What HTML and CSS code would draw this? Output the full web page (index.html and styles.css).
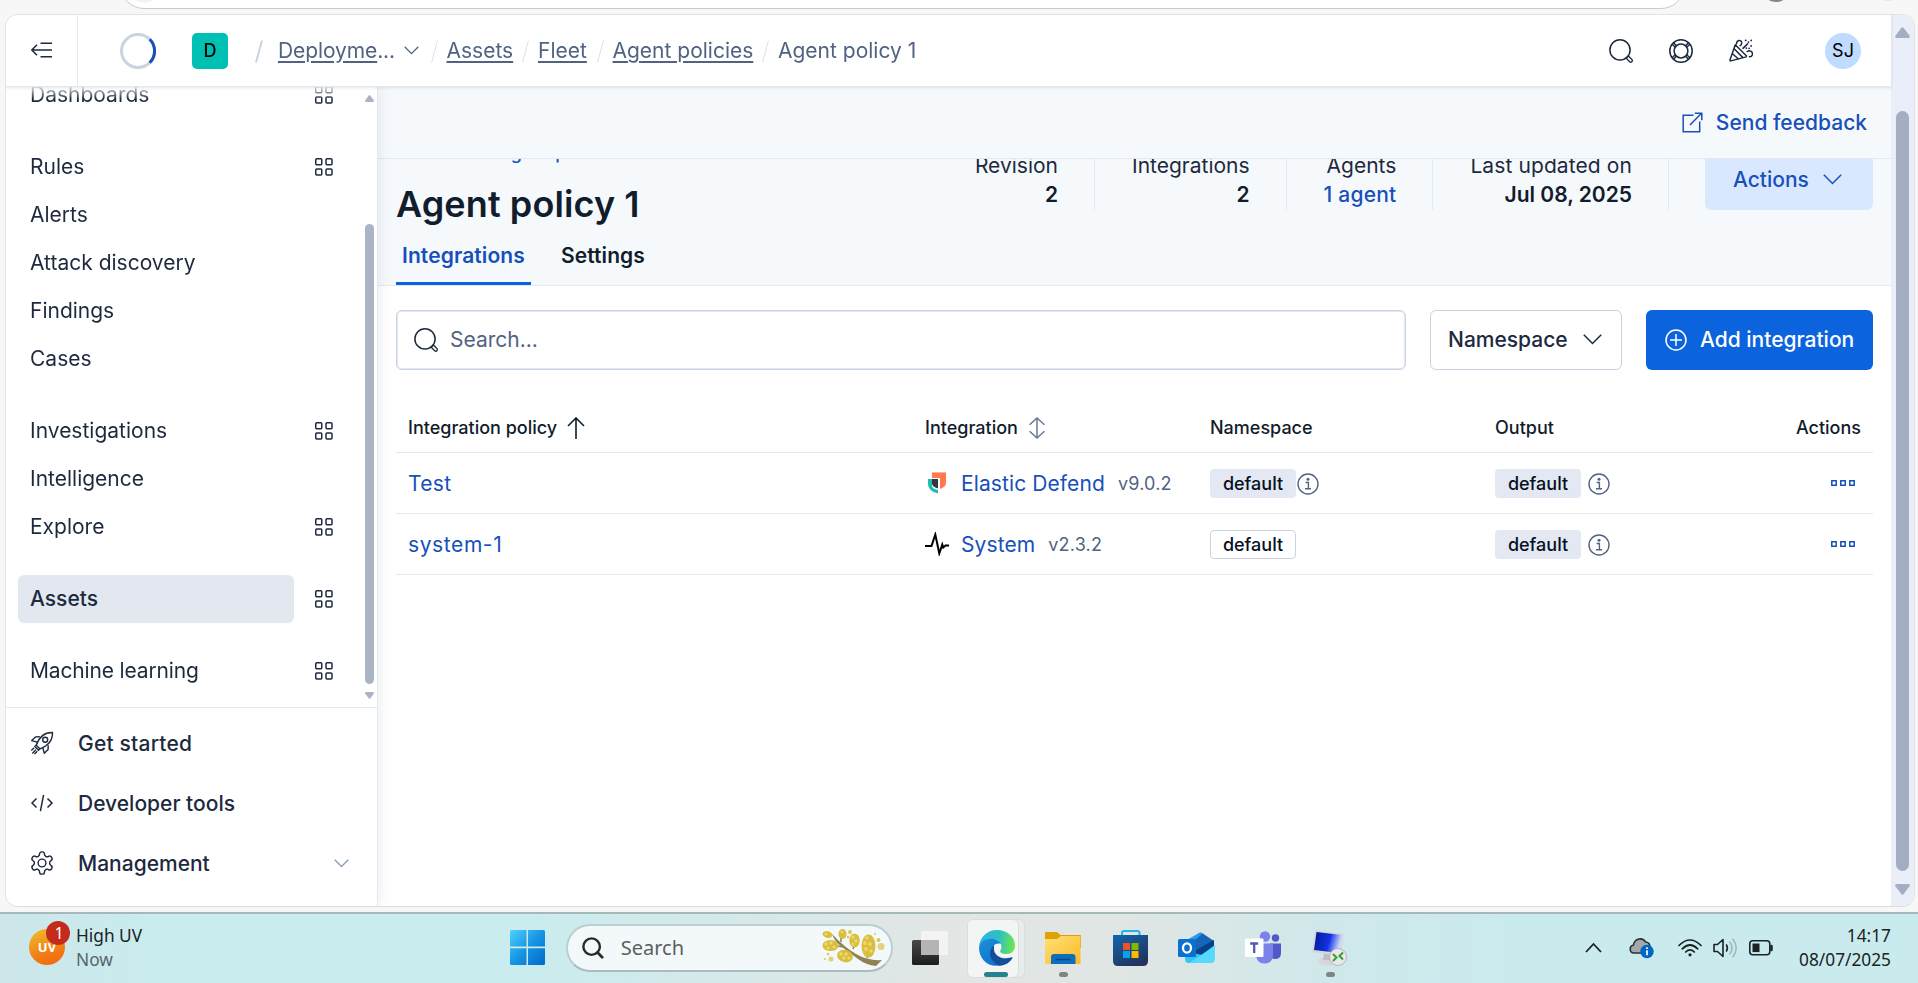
FILE: index.html
```html
<!DOCTYPE html>
<html lang="en">
<head>
<meta charset="utf-8">
<title>Agent policy 1</title>
<link rel="stylesheet" href="styles.css">
</head>
<body>
<svg class="defs" aria-hidden="true">
  <symbol id="grid" viewBox="0 0 18 18"><g fill="none" stroke="currentColor" stroke-width="1.5"><rect x=".75" y=".75" width="6" height="6" rx="1"/><rect x="11" y=".75" width="6" height="6" rx="1"/><rect x=".75" y="11" width="6" height="6" rx="1"/><rect x="11" y="11" width="6" height="6" rx="1"/></g></symbol>
  <symbol id="info" viewBox="0 0 22 22"><circle cx="11" cy="11" r="10" fill="none" stroke="currentColor" stroke-width="1.4"/><circle cx="11" cy="6.3" r="1.5" fill="currentColor"/><path d="M8.6 9.5h2.8v6M8 15.8h6" fill="none" stroke="currentColor" stroke-width="1.4"/></symbol>
  <symbol id="dots" viewBox="0 0 24 6"><path d="M.8.8h4.4v4.4H.8zM9.8.8h4.4v4.4H9.8zM18.8.8h4.4v4.4h-4.4z" fill="none" stroke="currentColor" stroke-width="1.5"/></symbol>
  <symbol id="search" viewBox="0 0 24 24"><g fill="none" stroke="currentColor" stroke-width="1.5"><circle cx="11" cy="10.9" r="10.1"/><path d="M17.2 19.2l2.2-2.2 3.5 3.5a1.5 1.5 0 0 1-2.2 2.2z" stroke-width="1.3"/></g></symbol>
</svg>

<div class="browser">
  <div class="addressbar"></div>
  <span class="site-chip"></span><span class="profile-chip"></span><span class="menu-chip"></span>
</div>

<div class="window">
  <div class="app">
    <header class="topbar">
      <div class="collapse"><svg width="22" height="16" viewBox="0 0 22 16" fill="none" stroke="currentColor" stroke-width="1.5"><path d="M9.5 1.2H21M1 8h20M9.5 14.8H21M6 2.8L.9 8 6 13.2"/></svg></div>
      <svg class="spinner" width="36" height="36" viewBox="0 0 36 36" fill="none" stroke-width="3"><circle cx="18" cy="18" r="16.5" stroke="#cad3e2"/><path d="M29.7 6.3A16.5 16.5 0 0 1 29.7 29.7" stroke="#1750ba"/></svg>
      <span class="space">D</span>
      <nav class="crumbs">
        <i class="slash strong"></i>
        <span class="crumb c1"><u>Deployme</u>...</span>
        <svg class="crumb-chev" width="15" height="9" viewBox="0 0 15 9" fill="none" stroke="currentColor" stroke-width="1.3"><path d="M.7.8l6.8 6.8L14.3.8"/></svg>
        <i class="slash"></i><u class="crumb c2">Assets</u>
        <i class="slash"></i><u class="crumb c3">Fleet</u>
        <i class="slash"></i><u class="crumb c4">Agent policies</u>
        <i class="slash"></i><span class="crumb c5">Agent policy 1</span>
      </nav>
      <div class="tools">
        <svg width="24" height="24"><use href="#search"/></svg>
        <svg width="24" height="24" viewBox="0 0 24 24" fill="none" stroke="currentColor" stroke-width="1.5"><circle cx="12" cy="12" r="11.2"/><circle cx="12" cy="12" r="6.9"/><path d="M4.5 3.8l3 3M3.2 5.3l3 3M19.5 3.8l-3 3M20.8 5.3l-3 3M4.5 20.2l3-3M3.2 18.7l3-3M19.5 20.2l-3-3M20.8 18.7l-3-3"/></svg>
        <svg width="24" height="24" viewBox="0 0 24.5 24" fill="none" stroke="currentColor" stroke-width="1.5" stroke-linejoin="round" stroke-linecap="round"><path d="M6.4 5.6L1 21.2q-.2 1 .9.9L17.6 18M6.4 5.6L17.9 17.2M5.2 9.6L14 18.5M3.6 14.800l6 5.300"/><path d="M7.600 4.800C7.800.600 12.700.200 13 3.500c.100 1.800-.900 2.700-1.600 3.100M18.600 12.600c2.600-1.900 6.100.300 5.200 3.400-.400 1.300-1.700 2-3 1.900M14.200 9.300l4.800-4.600"/><path d="M17 1.200h.1M22.600 1.200h.1M19.800 2.900h.1M22.600 6.800h.1M20.500 9.200h.1M17.600 9h.1" stroke-width="1.800"/></svg>
        <span class="avatar">SJ</span>
      </div>
    </header>

    <div class="body">
      <aside class="sidebar">
        <div class="nav-scroll">
          <ul class="nav">
            <li><span>Dashboards</span><svg><use href="#grid"/></svg></li>
            <li class="gap"><span>Rules</span><svg><use href="#grid"/></svg></li>
            <li><span>Alerts</span></li>
            <li><span>Attack discovery</span></li>
            <li><span>Findings</span></li>
            <li><span>Cases</span></li>
            <li class="gap"><span>Investigations</span><svg><use href="#grid"/></svg></li>
            <li><span>Intelligence</span></li>
            <li><span>Explore</span><svg><use href="#grid"/></svg></li>
            <li class="gap active"><span>Assets</span><svg><use href="#grid"/></svg></li>
            <li class="gap"><span class="ml">Machine learning</span><svg><use href="#grid"/></svg></li>
          </ul>
          <div class="nav-bar">
            <svg width="9" height="7" viewBox="0 0 9 7"><path d="M3.800.5q.7-.8 1.400 0L8.800 5.300Q9 7 8 7H1Q0 7 .2 5.300z" fill="currentColor"/></svg>
            <i></i>
            <svg width="9" height="7" viewBox="0 0 9 7"><path d="M3.800 6.500q.7.800 1.400 0L8.800 1.700Q9 0 8 0H1Q0 0 .2 1.700z" fill="currentColor"/></svg>
          </div>
        </div>
        <ul class="footnav">
          <li><svg width="24" height="24" viewBox="0 0 24 24" fill="none" stroke="currentColor" stroke-width="1.4" stroke-linejoin="round"><path d="M22.5 1.5C15 1.300 9.500 5 6.200 14.200l3.600 3.600C18.800 14.600 22.700 9 22.500 1.500z"/><circle cx="15.2" cy="8.800" r="2.500"/><path d="M9.800 5.800L5.500 5.900 1.700 9.600l5.500 1.600M18.200 14.200l-.1 4.300-3.800 3.800-1.500-5.500M6.200 14.200l-1.400 1.300 3.700 3.700 1.300-1.400M4.200 16.800L1.300 19.600M2.300 22.400l3.600-3.600M4.500 23l2.900-2.800"/></svg><span class="gs">Get started</span></li>
          <li><svg width="24" height="24" viewBox="0 0 24 24" fill="none" stroke="currentColor" stroke-width="1.5"><path d="M6.500 7.500L2 12l4.500 4.500M17.500 7.500L22 12l-4.500 4.500M13.600 3.800l-3.200 16.400"/></svg><span>Developer tools</span></li>
          <li><svg width="24" height="24" viewBox="1.4 1.2 21.2 21.6" fill="none" stroke="currentColor" stroke-width="1.3"><path d="M12.220 2h-.440a2 2 0 0 0-2 2v.180a2 2 0 0 1-1 1.730l-.430.250a2 2 0 0 1-2 0l-.150-.080a2 2 0 0 0-2.730.730l-.220.380a2 2 0 0 0 .730 2.730l.150.100a2 2 0 0 1 1 1.720v.510a2 2 0 0 1-1 1.740l-.150.090a2 2 0 0 0-.730 2.730l.220.380a2 2 0 0 0 2.730.730l.150-.080a2 2 0 0 1 2 0l.430.250a2 2 0 0 1 1 1.730V20a2 2 0 0 0 2 2h.440a2 2 0 0 0 2-2v-.180a2 2 0 0 1 1-1.730l.430-.250a2 2 0 0 1 2 0l.150.080a2 2 0 0 0 2.730-.730l.220-.390a2 2 0 0 0-.730-2.730l-.150-.080a2 2 0 0 1-1-1.740v-.500a2 2 0 0 1 1-1.740l.150-.090a2 2 0 0 0 .730-2.730l-.220-.380a2 2 0 0 0-2.730-.730l-.150.080a2 2 0 0 1-2 0l-.430-.250a2 2 0 0 1-1-1.730V4a2 2 0 0 0-2-2z"/><circle cx="12" cy="12" r="3.500"/></svg><span>Management</span><svg class="chev" width="15" height="9" viewBox="0 0 15 9" fill="none" stroke="currentColor" stroke-width="1.4"><path d="M.7.8l6.8 6.8L14.3.8"/></svg></li>
        </ul>
      </aside>

      <main class="page">
        <div class="feedback"><svg width="21" height="21" viewBox="0 0 21 21" fill="none" stroke="currentColor" stroke-width="1.5"><path d="M11.500 3.300H1.200v16.500h16.500V9.500M8 13L19 1.800M12.800 1.200h7v7"/></svg><span>Send feedback</span></div>
        <section class="pagehead">
          <div class="headrow">
            <div class="titles"><a class="back">&lt;&nbsp; View all agent policies</a><h1>Agent policy 1</h1></div>
            <dl class="stats">
              <div><dt>Revision</dt><dd>2</dd></div>
              <div><dt>Integrations</dt><dd>2</dd></div>
              <div><dt>Agents</dt><dd class="link">1 agent</dd></div>
              <div><dt class="upd">Last updated on</dt><dd class="date">Jul 08, 2025</dd></div>
            </dl>
            <button class="actions"><span>Actions</span><svg width="19" height="11" viewBox="0 0 19 11" fill="none" stroke="currentColor" stroke-width="1.5"><path d="M.8.8l8.7 8.7L18.2.8"/></svg></button>
          </div>
          <div class="tabs"><span class="tab on">Integrations</span><span class="tab">Settings</span></div>
        </section>
        <section class="content">
          <div class="filters">
            <div class="searchbox"><svg width="24" height="24"><use href="#search"/></svg><span>Search...</span></div>
            <button class="ns"><span>Namespace</span><svg width="19" height="11" viewBox="0 0 19 11" fill="none" stroke="currentColor" stroke-width="1.5"><path d="M.8.8l8.7 8.7L18.2.8"/></svg></button>
            <button class="add"><svg width="22" height="22" viewBox="0 0 22 22" fill="none" stroke="currentColor" stroke-width="1.5"><circle cx="11" cy="11" r="10"/><path d="M11 5v12M5 11h12"/></svg><span>Add integration</span></button>
          </div>
          <div class="table">
            <div class="row head">
              <div>Integration policy<svg class="up" width="18" height="22" viewBox="0 0 18 22" fill="none" stroke="currentColor" stroke-width="1.6"><path d="M9 22V1.500M1 9l8-8 8 8"/></svg></div>
              <div>Integration<svg class="updown" width="16" height="22" viewBox="0 0 16 22" fill="none" stroke="#69779a" stroke-width="1.5"><path d="M8 1v20M.6 7.800L8 1l7.400 6.800M.6 14.200L8 21l7.400-6.800"/></svg></div>
              <div>Namespace</div><div>Output</div><div class="end">Actions</div>
            </div>
            <div class="row">
              <div class="link t1">Test</div>
              <div><svg class="logo" width="24" height="24" viewBox="0 0 24 24"><path d="M7 1h14v10.500q0 4.500-6 6.500V7H7z" fill="#ff7850"/><path d="M7 1h14v1H7z" fill="#ffb39c"/><path d="M3 8h4v6.500q0 3.500 6 4.500v3.500Q3 20 3 13z" fill="#1dbdb1"/><path d="M7 8h6v9.500Q7 15.500 7 12.500z" fill="#343742"/></svg><span class="link">Elastic Defend</span><small>v9.0.2</small></div>
              <div><span class="badge">default</span><svg class="info tight"><use href="#info"/></svg></div>
              <div><span class="badge">default</span><svg class="info"><use href="#info"/></svg></div>
              <div class="end dots"><svg><use href="#dots"/></svg></div>
            </div>
            <div class="row">
              <div class="link t2">system-1</div>
              <div><svg class="logo" width="24" height="24" viewBox="0 0 24 24"><path d="M0 14h6.500L10.300 2.500 14.300 21.500 17.300 12.500 18.300 15.500 20.500 13.500H24" fill="none" stroke="#000" stroke-width="2"/></svg><span class="link">System</span><small>v2.3.2</small></div>
              <div><span class="badge hollow">default</span></div>
              <div><span class="badge">default</span><svg class="info"><use href="#info"/></svg></div>
              <div class="end dots"><svg><use href="#dots"/></svg></div>
            </div>
          </div>
        </section>
      </main>
    </div>
  </div>
  <div class="scroll">
    <svg width="15" height="11" viewBox="0 0 15 11"><path d="M6.500.700q1-1.100 2 0L14.600 8.800Q15 11 13.500 11h-12Q0 11 .4 8.800z" fill="currentColor"/></svg>
    <i></i>
    <svg width="15" height="11" viewBox="0 0 15 11"><path d="M6.500 10.300q1 1.100 2 0L14.600 2.200Q15 0 13.500 0h-12Q0 0 .4 2.200z" fill="currentColor"/></svg>
  </div>
</div>

<footer class="taskbar">
  <div class="weather"><span class="uv">UV<b>1</b></span><div><div class="w1">High UV</div><div class="w2">Now</div></div></div>
  <div class="dock">
    <div class="cell"><svg width="35" height="35" viewBox="0 0 35 35"><defs><linearGradient id="wg" x1="0" y1="0" x2="1" y2="1" gradientUnits="objectBoundingBox"><stop stop-color="#4fd0fd"/><stop offset=".5" stop-color="#1795e2"/><stop offset="1" stop-color="#0069c9"/></linearGradient></defs><path d="M1.500 0H16.500V16.500H0V1.500Q0 0 1.500 0zM18 0H33.500Q35 0 35 1.500V16.500H18zM0 18.300H16.500V35H1.500Q0 35 0 33.500zM18 18.300H35V33.500Q35 35 33.500 35H18z" fill="url(#wg)"/></svg></div>
    <div class="tsearch">
      <svg width="22" height="22" viewBox="0 0 24 24" fill="none" stroke="#262a2b" stroke-width="2.6"><circle cx="10.500" cy="10.500" r="9"/><path d="M17 17l5 5" stroke-linecap="round" stroke-width="3"/></svg>
      <span>Search</span>
      <svg class="wattle" width="64" height="38" viewBox="0 0 64 38"><path d="M10 5Q22 18 34 25T60 31L54 37Q44 36 36 30T20 18 10 5z" fill="#8f8154"/><path d="M19 13V8M31 20l2-5M45 29l2-6M15 17l7 1M30 24l-5 2" stroke="#8f8154" stroke-width="1.5"/><g fill="#d9bd3c"><ellipse cx="5.500" cy="5.500" rx="5" ry="3.300" transform="rotate(12 5.500 5.500)"/><ellipse cx="20.500" cy="5" rx="4" ry="5"/><ellipse cx="8.500" cy="16.500" rx="8" ry="5.500"/><ellipse cx="32.500" cy="11.500" rx="5.200" ry="7"/><ellipse cx="46.500" cy="17" rx="7" ry="11.500"/><ellipse cx="23" cy="27" rx="8" ry="6.200" transform="rotate(12 23 27)"/></g><g fill="#eed86a"><circle cx="4" cy="5" r="1.500"/><circle cx="20" cy="3" r="1.500"/><circle cx="4" cy="15" r="1.700"/><circle cx="9" cy="14" r="1.700"/><circle cx="12" cy="18" r="1.600"/><circle cx="6" cy="19" r="1.500"/><circle cx="31" cy="8" r="1.700"/><circle cx="34" cy="12" r="1.700"/><circle cx="31" cy="15" r="1.500"/><circle cx="45" cy="9" r="1.800"/><circle cx="43" cy="14" r="1.900"/><circle cx="48" cy="15" r="1.900"/><circle cx="44" cy="20" r="1.900"/><circle cx="49" cy="22" r="1.700"/><circle cx="19" cy="25" r="1.700"/><circle cx="24" cy="25" r="1.700"/><circle cx="22" cy="29" r="1.700"/><circle cx="27" cy="29" r="1.600"/></g><g fill="#dfc652"><circle cx="28" cy="3" r="2"/><circle cx="26" cy="8" r="1.200"/><circle cx="56.500" cy="11" r="2"/><circle cx="53" cy="5" r="1"/><circle cx="59" cy="17.500" r="3.500" opacity=".75"/><circle cx="6" cy="25" r="1.300"/><circle cx="9" cy="30" r="2.500" opacity=".8"/><circle cx="3" cy="30" r="1"/></g></svg>
    </div>
    <div class="cell tv"><svg width="36" height="34" viewBox="0 0 36 34"><defs><linearGradient id="tvg" x2="0" y2="1"><stop stop-color="#484848"/><stop offset="1" stop-color="#1d1d1d"/></linearGradient></defs><rect y="9" width="27" height="25" rx="1.500" fill="url(#tvg)"/><rect x="9" y="0" width="27" height="24" rx="1.500" fill="#f3f3f3"/><path d="M9 9h18v15H9z" fill="#b4b4b4"/></svg></div>
    <div class="cell active-app"><i class="tile2"></i><i class="tile"></i><svg width="36" height="36" viewBox="0 0 36 36"><defs><linearGradient id="eg1" x1="0" y1=".3" x2="1" y2=".4"><stop stop-color="#2ab6e8"/><stop offset=".55" stop-color="#2cc1c0"/><stop offset="1" stop-color="#6ee650"/></linearGradient><linearGradient id="eg2" x2=".7" y2="1"><stop stop-color="#1d93d6"/><stop offset="1" stop-color="#0f6fd0"/></linearGradient></defs><path d="M0 17C1 6 9 0 18 0c10 0 18 6.500 18 15.500 0 6-4 8.500-8.500 8.500-4 0-6.500-1.300-6.300-3 .2-1 1.300-1.600 1.300-4.300C22.500 12 18 9 12 9 6 9 2 12 0 17z" fill="url(#eg1)"/><path d="M0 18C.8 12 5.500 8.800 11.500 8.800c5 0 9 2 10.500 5.200-5-1.500-9 1.500-9.500 7C12 29 18 34 24 34.800 10 39 0 29.500 0 18z" fill="url(#eg2)"/><path d="M15 15C9 20 9.500 31 20.500 35.700c6-.4 10.500-3.200 13-7.700.4-.8-.2-1-1-.7C24 30.500 15 26 15 19z" fill="#114f98"/></svg><b class="run wide"></b></div>
    <div class="cell"><svg width="36" height="32" viewBox="0 0 36 32"><defs><linearGradient id="fg" x2="1" y2="1"><stop stop-color="#ffe077"/><stop offset="1" stop-color="#fbba28"/></linearGradient></defs><path d="M0 1Q0 0 1 0h11l3.500 3H35q1 0 1 1v12H0z" fill="#dfa008"/><path d="M0 7h12l4-3h19.500v28H1Q0 32 0 31z" fill="url(#fg)"/><path d="M6 32V25q0-3 3-3H27.500q3 0 3 3v7z" fill="#0f6fbe"/><path d="M11 27.500h14" stroke="#0a4a8b" stroke-width="1.5" stroke-linecap="round"/></svg><b class="run"></b></div>
    <div class="cell"><svg width="35" height="36" viewBox="0 0 35 36"><defs><linearGradient id="sg" x2=".6" y2="1"><stop stop-color="#0f66b0"/><stop offset="1" stop-color="#24335d"/></linearGradient></defs><path d="M9 7V3q0-2 2-2h13.500q2 0 2 2v4" fill="none" stroke="#27b1ea" stroke-width="2"/><path d="M0 5h35v26q0 5-5 5H5q-5 0-5-5z" fill="url(#sg)"/><path d="M10 13h7v7h-7z" fill="#f25022"/><path d="M18.500 13h7v7h-7z" fill="#7fba00"/><path d="M10 21h7v7h-7z" fill="#00a4ef"/><path d="M18.500 21h7v7h-7z" fill="#ffb900"/></svg></div>
    <div class="cell"><svg width="37" height="32" viewBox="0 0 37 32"><path d="M7 12L21 1q1.500-1 3 0L36 9v8L20 25z" fill="#1467b8"/><path d="M7 9L21 1l4 0L17 8z" fill="#2a9be8"/><path d="M15 20L36 8v12L22 28z" fill="#083f87"/><path d="M7 19L24 23 36.500 13V27q0 4-4 4H11q-4 0-4-4z" fill="#32c4f3"/><path d="M11 31L36.500 14v13q0 4-4 4z" fill="#55dafd"/><rect y="7" width="18" height="18" rx="1.500" fill="#0b70d0"/><ellipse cx="9" cy="16" rx="4" ry="4.700" fill="none" stroke="#fff" stroke-width="2.3"/></svg></div>
    <div class="cell"><svg width="37" height="33" viewBox="0 0 37 33"><circle cx="20" cy="5.500" r="5.200" fill="#7b83eb"/><circle cx="30.500" cy="7" r="3.700" fill="#5059c9"/><path d="M25 12.500h11V22q0 6-6 6-3 0-5-2z" fill="#5059c9"/><path d="M11 12.500h17V23q0 9.500-8.500 9.500T11 23z" fill="#7b83eb"/><rect y="7.500" width="18.500" height="18.500" rx="1" fill="#fff"/><path d="M5.200 12.500h8M9.200 12.500v9.500" stroke="#5058b8" stroke-width="2.3"/></svg></div>
    <div class="cell"><svg width="36" height="36" viewBox="0 0 36 36"><defs><linearGradient id="rg" x1="0" y1="0" x2="1" y2=".2"><stop stop-color="#001a9a"/><stop offset=".6" stop-color="#1233e0"/><stop offset="1" stop-color="#cdd8ff"/></linearGradient></defs><ellipse cx="15" cy="31" rx="9" ry="4.500" fill="#d7d7d9"/><path d="M12 22h7l1 8h-9z" fill="#bdbfc4"/><path d="M3 0l29 3.500L28.500 26 0 22z" fill="#d5d7dd"/><path d="M4.500 2l25.500 3-3 18L2 20z" fill="url(#rg)"/><circle cx="26" cy="27" r="8.500" fill="#e8e8e8" stroke="#aaa" stroke-width=".8"/><path d="M21 24l3.500 3.500L21 31M31 22.500L27.500 26l3.500 3.500" fill="none" stroke="#33a033" stroke-width="2"/></svg><b class="run"></b></div>
  </div>
  <div class="tray">
    <svg class="y1" width="17" height="11" viewBox="0 0 17 11" fill="none" stroke="#1b2324" stroke-width="1.8"><path d="M1 10l7.500-8L16 10"/></svg>
    <svg class="cloud" width="25" height="22" viewBox="0 0 25 22"><path d="M5 16C0 15.500 0 9 4.500 8 5.500 1 14 0 16.500 5c3 .2 4.500 2 4.500 5v6z" fill="#a3a8aa" stroke="#2a3233" stroke-width="1.6"/><circle cx="18" cy="14.500" r="6.700" fill="#0067c0"/><path d="M18 10.200v1.800M18 13.200v5" stroke="#fff" stroke-width="1.7"/></svg>
    <svg class="wifi" width="24" height="18" viewBox="0 0 24 18" fill="none" stroke="#1b2324" stroke-width="1.7" stroke-linecap="round"><path d="M1 6.500Q12-4.500 23 6.500M4.300 9.800q7.700-7.600 15.400 0M7.700 13q4.300-4.200 8.600 0"/><circle cx="12" cy="15.800" r="1.600" fill="#1b2324" stroke="none"/></svg>
    <svg class="vol" width="25" height="20" viewBox="0 0 25 20" fill="none" stroke="#1b2324" stroke-width="1.6" stroke-linecap="round" stroke-linejoin="round"><path d="M1 6.500h3.500L10 1.500v17l-5.500-5H1zM13.500 7q1.800 3 0 6"/><path d="M17 4q4 6 0 12M20 1.200q6.500 8.800 0 17.600" stroke="#9fb9ba"/></svg>
    <svg width="24" height="16" viewBox="0 0 24 16" fill="none" stroke="#1b2324" stroke-width="1.6"><rect x=".8" y=".8" width="20" height="14" rx="3"/><path d="M3.500 3.500h7v8.600h-7z" fill="#1b2324" stroke="none"/><path d="M22.500 6v4" stroke-width="2.5" stroke-linecap="round"/></svg>
    <div class="clock"><div>14:17</div><div>08/07/2025</div></div>
  </div>
</footer>
</body>
</html>
```
FILE: styles.css
```css
* { box-sizing: border-box; }
html, body { margin: 0; height: 983px; overflow: hidden; }
body { width: 1918px; background: #f7f7f7; font-family: Inter, "Liberation Sans", sans-serif; font-size: 21px; color: #1d2a3e; display: flex; flex-direction: column; }
ul, dl, dd, h1 { margin: 0; padding: 0; list-style: none; }
button { font: inherit; border: 0; padding: 0; }
svg { flex: none; display: block; }
.defs { position: absolute; width: 0; height: 0; }
.link { color: #1750ba; }

.browser { height: 14px; flex: none; position: relative; overflow: hidden; }
.addressbar { position: absolute; left: 120px; top: -40px; width: 1565px; height: 49px; border: 1.5px solid #cacaca; border-radius: 24px; background: #fff; }
.site-chip { position: absolute; left: 129px; top: -27px; width: 30px; height: 30px; border-radius: 50%; background: #f3f3f3; }
.profile-chip { position: absolute; left: 1761px; top: -28px; width: 30px; height: 30px; border-radius: 50%; background: #8d8580; }
.menu-chip { position: absolute; left: 1873px; top: -29px; width: 30px; height: 30px; border-radius: 50%; background: #efe9da; }

.window { flex: none; margin-left: 5px; width: 1910px; height: 893px; border: 1px solid #e3e3e5; border-bottom: 1.5px solid #dcdcdc; border-radius: 13px; overflow: hidden; display: flex; background: #fff; }
.app { width: 1885px; display: flex; flex-direction: column; }

.topbar { height: 72px; flex: none; display: flex; align-items: center; border-bottom: 1px solid #e3e8f2; box-shadow: 0 1px 3px rgba(60,75,110,.14); position: relative; z-index: 2; background: #fff; }
.collapse { width: 72px; height: 72px; border-right: 1px solid #e3e8f2; display: flex; align-items: center; padding: 0 0 1px 25px; }
.spinner { margin-left: 42px; }
.space { width: 36px; height: 36px; margin-left: 36px; border-radius: 5px; background: #00bfb3; color: #000; font-size: 18px; font-weight: 500; line-height: 36px; text-align: center; }
.crumbs { display: flex; align-items: center; color: #516381; height: 36px; }
.crumb { white-space: nowrap; text-underline-offset: 3px; text-decoration-thickness: 1.5px; }
.crumb u { text-underline-offset: 3px; text-decoration-thickness: 1.5px; }
.slash { width: 1px; height: 23px; background: #dbe2ee; transform: rotate(15deg); margin: 2px 12px 0 12.5px; }
.slash.strong { background: #cad3e2; width: 2px; margin: 2px 18px 0 30px; }
.c1 { width: 115px; letter-spacing: -.1px; }
.crumb-chev { margin: 0 2px 0 11px; }
.c2 { width: 66px; } .c3 { width: 49px; } .c4 { width: 140px; }
.tools { margin-left: auto; display: flex; align-items: center; gap: 36px; margin-right: 30px; }
.avatar { width: 36px; height: 36px; margin-left: 36px; border-radius: 50%; background: #bfdbff; color: #000; font-size: 18px; line-height: 36px; text-align: center; }

.body { flex: 1; min-height: 0; display: flex; }
.sidebar { width: 372px; flex: none; border-right: 1px solid #e3e8f2; box-shadow: 0 0 14px rgba(60,75,110,.12); position: relative; z-index: 1; display: flex; flex-direction: column; background: #fff; }
.nav-scroll { height: 621px; border-bottom: 1px solid #e3e8f2; display: flex; overflow: hidden; }
.nav { width: 362px; margin-top: -16px; padding-left: 12px; -webkit-mask-image: linear-gradient(transparent 14px, #000 28px); mask-image: linear-gradient(transparent 14px, #000 28px); }
.nav li { height: 48px; display: flex; align-items: center; }
.nav li.gap { margin-top: 24px; }
.nav span { width: 276px; height: 48px; line-height: 48px; padding-left: 12px; border-radius: 6px; }
.nav .ml { letter-spacing: -.15px; }
.nav svg { width: 18px; height: 18px; margin-left: 21px; }
.active span { background: #e3e8f0; font-weight: 500; }
.nav-bar { color: #abb4c4; padding-top: 8px; margin-left: -3px; width: 9px; }
.nav-bar i { display: block; height: 460px; margin: 122px 0 8px; border-radius: 5px; background: #abb4c4; }
.footnav { padding-top: 5px; font-weight: 500; }
.footnav li { height: 60px; display: flex; align-items: center; padding-left: 24px; }
.footnav span { margin-left: 24px; }
.footnav .gs { letter-spacing: .2px; }
.footnav .chev { margin: 0 28px 0 auto; color: #8e9fbc; }

.page { flex: 1; min-width: 0; display: flex; flex-direction: column; }
.feedback { height: 72px; flex: none; background: #f6f9fc; border-bottom: 1px solid #e3e8f2; display: flex; align-items: center; justify-content: flex-end; gap: 13px; padding-right: 24px; color: #1750ba; font-weight: 500; }
.pagehead { height: 127px; flex: none; background: #f6f9fc; border-bottom: 1px solid #e3e8f2; padding: 0 18px; overflow: hidden; display: flex; flex-direction: column; }
.headrow { display: flex; height: 71px; flex: none; }
.titles { flex: 1; margin-top: -20px; }
.back { display: block; font-size: 18px; line-height: 27px; color: #1750ba; padding-left: 9px; font-weight: 500; letter-spacing: .2px; }
h1 { font-size: 36px; line-height: 45px; font-weight: 600; color: #111c2c; margin-top: 16px; letter-spacing: .1px; white-space: nowrap; }
.stats { display: flex; text-align: right; height: 51px; overflow: hidden; }
.stats > div { padding-right: 36px; margin-right: 37px; border-right: 1px solid #e3e8f2; line-height: 30px; white-space: nowrap; }
.stats > div:last-child { margin-right: 36px; }
.stats dt { margin-top: -8px; }
.stats dd { font-weight: 600; color: #111c2c; margin-top: -1px; }
.stats dd.link { font-weight: 500; color: #1750ba; letter-spacing: .2px; }
.upd { letter-spacing: .1px; }
.actions { width: 168px; height: 60px; margin-top: -9px; border-radius: 6px; background: #d9e8ff; color: #1750ba; font-weight: 500; display: flex; align-items: center; gap: 14px; padding: 0 0 1px 28px; }
.tabs { display: flex; gap: 24px; font-weight: 600; height: 56px; letter-spacing: .1px; }
.tab { padding: 9px 6px 0; line-height: 34px; color: #111c2c; }
.tab.on { color: #1750ba; border-bottom: 3px solid #0b64dd; }
.content { padding: 24px 18px 0; }
.filters { display: flex; gap: 24px; height: 60px; }
.searchbox { flex: 1; border: 1px solid #cad3e2; box-shadow: inset 0 0 0 .5px #cad3e2; border-radius: 6px; display: flex; align-items: center; gap: 12px; padding: 0 0 1px 17px; color: #1d2a3e; }
.searchbox span { color: #516381; }
.ns { width: 192px; border: 1px solid #cad3e2; border-radius: 6px; background: #fff; color: #1d2a3e; font-weight: 500; display: flex; align-items: center; gap: 15px; padding: 0 0 1px 17px; }
.add { width: 227px; border-radius: 6px; background: #0b64dd; color: #fff; font-weight: 500; display: flex; align-items: center; gap: 13px; padding: 0 0 1px 19px; white-space: nowrap; }
.table { margin-top: 33px; }
.row { display: grid; grid-template-columns: 517px 285px 285px 285px 1fr; height: 61px; border-bottom: 1px solid #e3e8f2; }
.row > div { padding-left: 12px; display: flex; align-items: center; white-space: nowrap; }
.row .end { justify-content: flex-end; padding-right: 12px; }
.row .link { letter-spacing: .1px; }
.row .t1 { letter-spacing: .3px; }
.row .t2 { letter-spacing: .6px; }
.head { height: 50px; font-size: 18px; font-weight: 500; color: #111c2c; }
.up { margin-left: 10px; } .updown { margin-left: 11px; }
.logo { margin-right: 12px; }
.row small { font-size: 18px; color: #516381; margin-left: 13px; letter-spacing: .2px; }
.badge { height: 29px; width: 86px; text-align: center; line-height: 29px; font-size: 18px; font-weight: 500; background: #e3e8f2; border-radius: 4px; color: #07101f; margin-top: 1px; }
.badge.hollow { background: #fff; border: 1px solid #cad3e2; line-height: 27px; }
.info { width: 22px; height: 22px; color: #516381; margin: 2px 0 0 7px; }
.info.tight { margin-left: 1px; }
.dots svg { width: 24px; height: 6px; color: #1750ba; margin-right: 6px; }
.scroll { flex: 1; background: #e9eef8; color: #a3aec2; padding: 12px 0 0 4px; }
.scroll i { display: block; width: 13px; height: 760px; margin: 73px 0 13px 1px; border-radius: 7px; background: #a3aec2; }

.taskbar { position: relative; margin-top: 5px; height: 71px; border-top: 2px solid #a6b9b9; background: linear-gradient(90deg, #cde6ea 0, #c9ecee 8%, #c9ecee 27%, #d5e9ea 37%, #e2e6e4 50%, #e0e6e4 58%, #cfe8eb 70%, #c9ebee 80%, #c9ebed 100%); display: flex; font-family: "Noto Sans", "Open Sans", sans-serif; font-size: 18px; color: #1b2324; }
.weather { width: 494px; display: flex; padding-left: 29px; }
.weather > div { margin: 10px 0 0 11px; line-height: 24px; font-size: 17.3px; }
.w2 { color: #566668; }
.uv { position: relative; width: 36px; height: 36px; margin-top: 15px; border-radius: 50%; background: linear-gradient(160deg, #edc02c, #f27a15 65%, #f0650e); color: #fff; font-size: 13px; font-weight: 700; line-height: 36px; text-align: center; }
.uv b { position: absolute; left: 17px; top: -8px; width: 24px; height: 24px; border-radius: 50%; background: #c42b1c; font-size: 16px; font-weight: 400; line-height: 24px; padding-left: 2px; }
.dock { display: flex; align-items: center; height: 67px; }
.cell { width: 66.7px; height: 67px; display: flex; align-items: center; justify-content: center; position: relative; }
.cell svg { position: relative; }
.tv { margin-left: 4px; }
.tsearch { width: 327px; height: 48px; margin-left: 5px; border: 2px solid #bccfd0; border-bottom-color: #aabcbd; border-radius: 24px; background: #f3f9fa; display: flex; align-items: center; padding: 0 5px 0 14px; color: #5a5e60; font-size: 20px; }
.tsearch span { margin-left: 17px; }
.wattle { margin-left: auto; }
.tile, .tile2 { position: absolute; top: 5px; left: 4px; width: 52px; height: 59px; border: 1px solid #d8dedd; border-radius: 6px; background: #f3f5f4; }
.tile2 { left: 10px; background: #e9ecec; }
.run { position: absolute; bottom: 4px; left: 29px; width: 9px; height: 5px; border-radius: 3px; background: #7f8584; }
.run.wide { left: 21px; width: 24px; background: #26828e; }
.tray { margin-left: auto; display: flex; align-items: center; height: 67px; padding-right: 27px; }
.cloud { margin-left: 27px; } .wifi { margin-left: 24px; } .vol { margin: 0 11px; }
.clock { width: 118px; text-align: right; line-height: 24px; font-size: 17.3px; }
```
